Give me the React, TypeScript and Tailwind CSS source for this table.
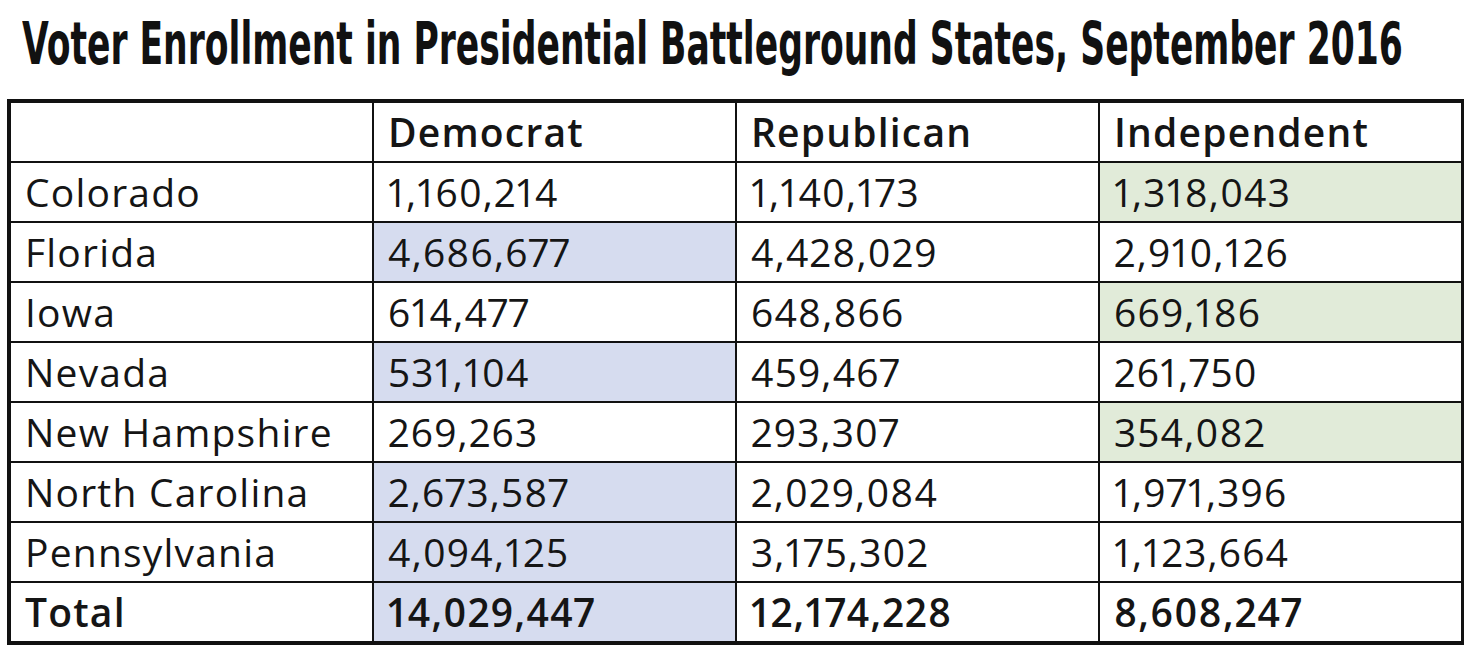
import React, { useLayoutEffect, useRef, useState } from "react";

type Row = { state: string; d: string; r: string; i: string; hd?: boolean; hi?: boolean };

const rows: Row[] = [
  { state: "Colorado", d: "1,160,214", r: "1,140,173", i: "1,318,043", hi: true },
  { state: "Florida", d: "4,686,677", r: "4,428,029", i: "2,910,126", hd: true },
  { state: "Iowa", d: "614,477", r: "648,866", i: "669,186", hi: true },
  { state: "Nevada", d: "531,104", r: "459,467", i: "261,750", hd: true },
  { state: "New Hampshire", d: "269,263", r: "293,307", i: "354,082", hi: true },
  { state: "North Carolina", d: "2,673,587", r: "2,029,084", i: "1,971,396", hd: true },
  { state: "Pennsylvania", d: "4,094,125", r: "3,175,302", i: "1,123,664", hd: true },
];

function Cell({ children, bg = "bg-white", bold = false }: { children?: React.ReactNode; bg?: string; bold?: boolean }) {
  return (
    <div
      className={`${bg} flex items-center pl-[14px] pb-[2px] h-[58px] text-[39px] leading-none tracking-[1.2px] proportional-nums text-[#151515] font-['Open_Sans','Lato',sans-serif] ${
        bold ? "font-semibold" : "font-normal"
      }`}
    >
      {children}
    </div>
  );
}

function Title() {
  const ref = useRef<HTMLHeadingElement>(null);
  const [scale, setScale] = useState(1);
  useLayoutEffect(() => {
    if (ref.current) {
      const w = ref.current.offsetWidth;
      if (w > 0) setScale(1381 / w);
    }
  }, []);
  return (
    <h1
      ref={ref}
      style={{ transform: `scaleX(${scale})` }}
      className="inline-block origin-left whitespace-nowrap text-[59px] leading-[74px] font-bold text-[#111] font-['Liberation_Sans_Narrow','DejaVu_Sans_Condensed','DejaVu_Sans',sans-serif]"
    >
      Voter Enrollment in Presidential Battleground States, September 2016
    </h1>
  );
}

export default function App() {
  return (
    <div className="w-[1480px] h-[655px] bg-white overflow-hidden">
      <div className="h-[99px] pl-[22px] pt-[7px] whitespace-nowrap">
        <Title />
      </div>
      <div className="ml-[7px] w-[1457px] border-t-4 border-l-4 border-b-4 border-r-[3px] border-[#111] bg-[#111]">
        <div className="grid grid-cols-4 gap-[2px]">
          <Cell />
          <Cell bold>Democrat</Cell>
          <Cell bold>Republican</Cell>
          <Cell bold>Independent</Cell>
          {rows.map((r) => (
            <React.Fragment key={r.state}>
              <Cell>{r.state}</Cell>
              <Cell bg={r.hd ? "bg-[#d6dcef]" : "bg-white"}>{r.d}</Cell>
              <Cell>{r.r}</Cell>
              <Cell bg={r.hi ? "bg-[#e1ebd9]" : "bg-white"}>{r.i}</Cell>
            </React.Fragment>
          ))}
          <Cell bold>Total</Cell>
          <Cell bold bg="bg-[#d6dcef]">14,029,447</Cell>
          <Cell bold>12,174,228</Cell>
          <Cell bold>8,608,247</Cell>
        </div>
      </div>
    </div>
  );
}
